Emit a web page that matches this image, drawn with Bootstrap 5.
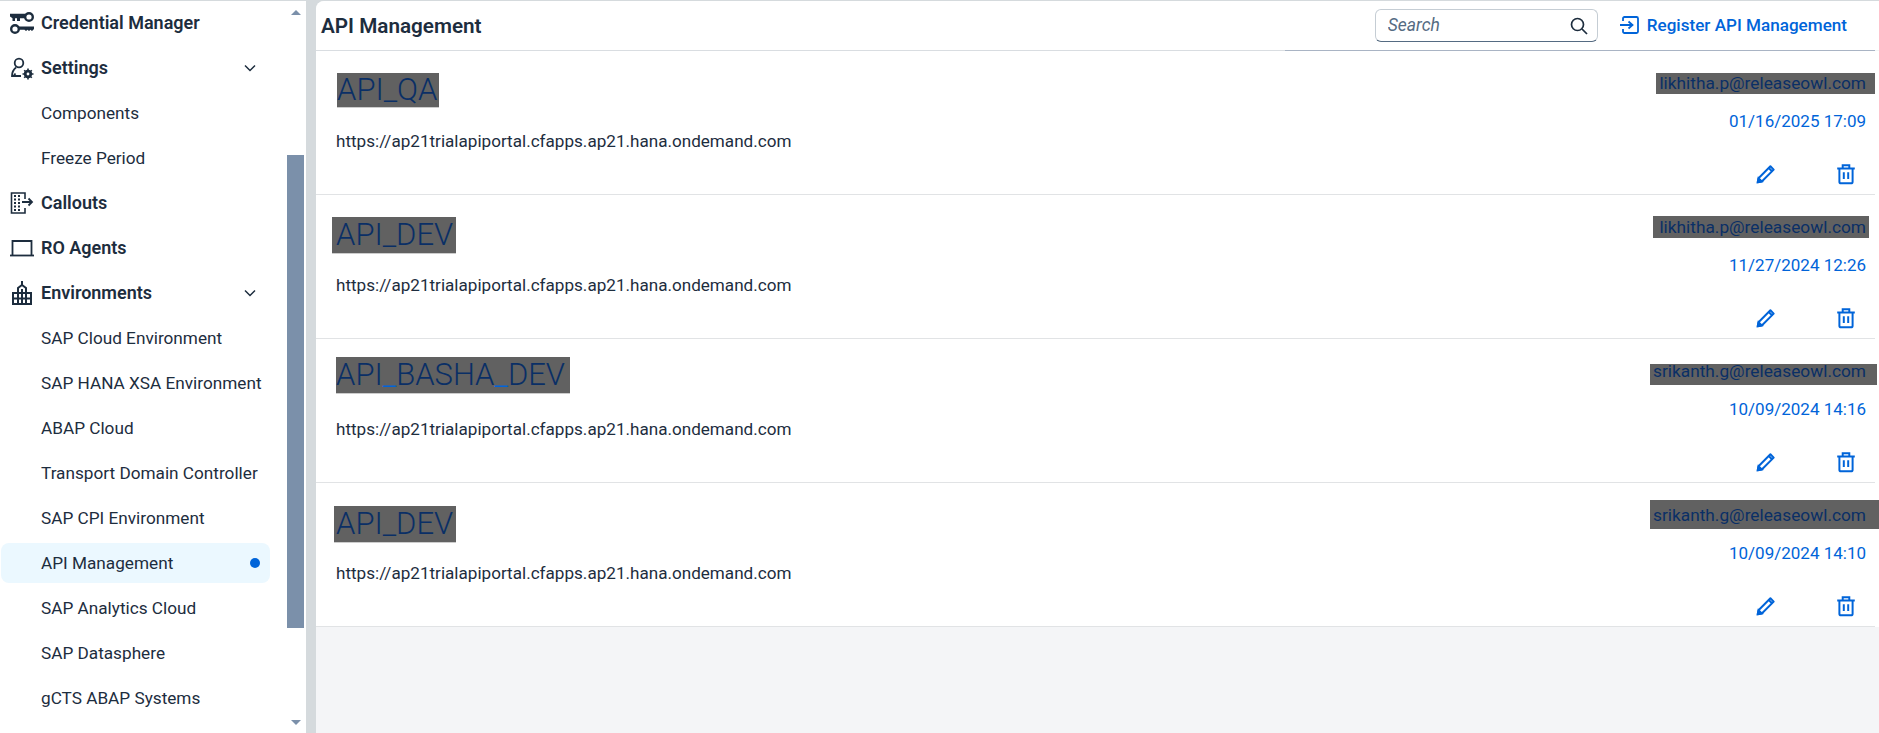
<!DOCTYPE html>
<html lang="en">
<head>
<meta charset="utf-8">
<title>API Management</title>
<link href="https://cdn.jsdelivr.net/npm/bootstrap@5.3.0/dist/css/bootstrap.min.css" rel="stylesheet">
<style>
html,body{height:733px;overflow:hidden;background:#d5dadd;font-family:Roboto,"Liberation Sans",sans-serif;color:#1d2d3e;font-size:17px}
.shell{height:733px;padding-top:1px}
.side{width:306px;background:#fff;overflow:hidden;flex:none}
.navcol{width:287px;margin-top:-1px}
.nav-item-x{height:45px;flex:none;padding-left:10px;gap:7px;font-size:17.2px;white-space:nowrap}
.nav-item-x.top{font-weight:600;font-size:18px}
.nav-item-x.sub{padding-left:41px;padding-top:2px}
.nav-item-x.cur{background:#ebf8ff;border-radius:8px;height:40px;margin:3px 17px 2px 1px;padding-left:40px}
.nav-item-x.cur>span:first-child{padding-top:2px}
.ico{width:24px;height:24px;flex:none}
.chev{width:12px;height:8px;margin-left:auto;margin-right:31px}
.dotx{width:10px;height:10px;background:#0064d9;border-radius:50%;margin-left:auto;margin-right:10px}
.sbar{width:17px;margin-top:-1px}
.arrow-up,.arrow-dn{width:0;height:0;border-left:5px solid transparent;border-right:5px solid transparent;align-self:center}
.arrow-up{border-bottom:5px solid #7b90aa;margin-top:10px}
.arrow-dn{border-top:5px solid #7b90aa;margin-top:92px}
.sthumb{height:473px;background:#7b90aa;margin-top:140px}
.mainx{margin-left:10px;flex:1;min-width:0;background:#f4f5f7;border-top-left-radius:8px;overflow:hidden}
.headx{height:49px;background:#fff;padding:0 32px 0 5px}
.headx h1{font-size:20.7px;font-weight:600;margin:0;color:#1d2d3e;padding-top:2px}
.searchx{width:223px;height:33px;border:1px solid #c5cdd4;border-bottom-color:#556b82;border-radius:6px;background:#fff;padding:0 9px 0 12px;margin-right:22px}
.searchx input{border:0;outline:0;flex:1;min-width:0;font-size:17.5px;font-style:italic;color:#556b82;padding:0;background:none}
.searchx input::placeholder{color:#556b82;opacity:1}
.reg{color:#0064d9;font-size:17.1px;font-weight:500;text-decoration:none;gap:7px}
.rulex{height:1px}
.rule-l{width:969px;background:#d9dde1}
.rule-r{flex:1;background:#a9b4c4;margin-right:4px}
.rowx{height:144px;background:#fff;padding-right:4px}
.rowin{height:144px;border-bottom:1px solid #e1e3e5;padding:0 9px 0 20px}
.lcol{min-width:0}
.twrap{height:77px;padding-top:22px}
.tlink{display:inline-block;font-size:31px;font-weight:300;line-height:36px;height:36px;background:#616161;color:#0a2f66;text-decoration:none;box-shadow:0 1px 0 #ccc}
.t1{margin-left:1px;padding-right:1px;margin-top:0;height:34px;line-height:34px}
.t2{margin-left:-4px;padding:0 3px 0 4px;margin-top:0}
.t3{padding-right:5px;margin-top:-4px}
.t4{margin-left:-2px;padding:0 3px 0 2px;margin-top:1px}
.bluex{color:#0064d9}
.urlx{line-height:26px;font-size:17.1px}
.rcol{text-align:right}
.ewrap{height:60px;padding-top:20px}
.emailx{display:inline-block;line-height:20px;background:#616161;color:#0a2f66;font-size:17.3px;padding-left:3px}
.e1{padding-right:9px;margin-right:-9px;padding-bottom:1px}
.e2{padding-left:6px;padding-right:3px;margin-right:-3px;padding-top:1px;margin-top:-1px;padding-bottom:1px}
.e3{padding-right:11px;margin-right:-11px;line-height:14px;height:21px;margin-top:3px}
.e4{padding-right:13px;margin-right:-13px;padding-top:5px;margin-top:-5px;padding-bottom:4px}
.datex{color:#0064d9;line-height:20px;font-size:17px}
.actx{margin-top:32px;gap:58px;padding-right:9px}
.actx svg{width:22px;height:22px;display:block}
</style>
</head>
<body>
<div class="shell d-flex">
  <aside class="side d-flex">
    <nav class="navcol">
      <div class="nav-item-x top d-flex align-items-center">
        <svg class="ico" viewBox="0 0 24 24" fill="none" stroke="#1d2d3e" stroke-width="2.400"><circle cx="19" cy="6" r="3.800"/><path d="M0 2.800h16v4.500H10v2.700H7V7.300H5V10H2.500V7.300L0 5.500z" fill="#1d2d3e" stroke="none"/><circle cx="5" cy="18" r="3.800"/><path d="M8 15.500h16v2.500l-2 2-1.500-1.200-1.500 1.200-1.500-1.200-1.500 1.200-1.500-1.200H8z" fill="#1d2d3e" stroke="none"/></svg>
        <span>Credential Manager</span>
      </div>
      <div class="nav-item-x top d-flex align-items-center">
        <svg class="ico" viewBox="0 0 24 24" fill="none" stroke="#1d2d3e" stroke-width="1.800"><circle cx="9" cy="7" r="4.300"/><path d="M6 11.500C3.500 13.500 2 16.500 2 20h9M5.500 17.500l-2 2.500"/><circle cx="18" cy="18" r="2.800" stroke-width="2.800"/><path d="M18 12.500v2.500M18 21v2.500M12.500 18H15M21 18h2.500M14.200 14.200l1.600 1.600M20.200 20.200l1.600 1.600M14.200 21.800l1.600-1.600M20.200 15.800l1.600-1.600" stroke-width="1.600"/></svg>
        <span>Settings</span>
        <svg class="chev" viewBox="0 0 12 8" fill="none" stroke="#1d2d3e" stroke-width="1.500"><path d="M1 1.500l5 5 5-5"/></svg>
      </div>
      <div class="nav-item-x sub d-flex align-items-center">Components</div>
      <div class="nav-item-x sub d-flex align-items-center">Freeze Period</div>
      <div class="nav-item-x top d-flex align-items-center">
        <svg class="ico" viewBox="0 0 24 24" fill="none" stroke="#1d2d3e" stroke-width="1.600"><path d="M15 8V2H1.500v20H15v-5"/><path d="M12 11h10M18.500 7.500 22 11l-3.500 3.500" stroke-width="1.800"/><path d="M4 5h2M8 5h2M4 8.500h2M8 8.500h2M4 12h2M8 12h2M4 15.500h2M8 15.500h2M4 19h2M8 19h2" stroke-width="1.800"/></svg>
        <span>Callouts</span>
      </div>
      <div class="nav-item-x top d-flex align-items-center">
        <svg class="ico" viewBox="0 0 24 24" fill="none" stroke="#1d2d3e" stroke-width="1.800"><path d="M2.500 19V5h19v14"/><path d="M0 19.500h24"/></svg>
        <span>RO Agents</span>
      </div>
      <div class="nav-item-x top d-flex align-items-center">
        <svg class="ico" viewBox="0 0 24 24" fill="none" stroke="#1d2d3e" stroke-width="2"><path d="M3 23V12h5V7l4-3 4 3v5h5v11z"/><path d="M12 4V0M3 17.500h18M8 12h8M8 12v11M12 8v15M16 12v11"/></svg>
        <span>Environments</span>
        <svg class="chev" viewBox="0 0 12 8" fill="none" stroke="#1d2d3e" stroke-width="1.500"><path d="M1 1.500l5 5 5-5"/></svg>
      </div>
      <div class="nav-item-x sub d-flex align-items-center">SAP Cloud Environment</div>
      <div class="nav-item-x sub d-flex align-items-center">SAP HANA XSA Environment</div>
      <div class="nav-item-x sub d-flex align-items-center">ABAP Cloud</div>
      <div class="nav-item-x sub d-flex align-items-center">Transport Domain Controller</div>
      <div class="nav-item-x sub d-flex align-items-center">SAP CPI Environment</div>
      <div class="nav-item-x cur d-flex align-items-center"><span>API Management</span><span class="dotx"></span></div>
      <div class="nav-item-x sub d-flex align-items-center">SAP Analytics Cloud</div>
      <div class="nav-item-x sub d-flex align-items-center">SAP Datasphere</div>
      <div class="nav-item-x sub d-flex align-items-center">gCTS ABAP Systems</div>
    </nav>
    <div class="sbar d-flex flex-column">
      <span class="arrow-up"></span>
      <span class="sthumb"></span>
      <span class="arrow-dn"></span>
    </div>
  </aside>
  <main class="mainx">
    <header class="headx d-flex align-items-center">
      <h1 class="me-auto">API Management</h1>
      <div class="searchx d-flex align-items-center">
        <input type="text" placeholder="Search" aria-label="Search">
        <svg width="18" height="18" viewBox="0 0 18 18" fill="none" stroke="#1d2d3e" stroke-width="1.700"><circle cx="7.500" cy="7.500" r="6"/><path d="M12 12l5 5"/></svg>
      </div>
      <a class="reg d-flex align-items-center" href="#">
        <svg width="20" height="20" viewBox="0 0 20 20" fill="none" stroke="#0064d9" stroke-width="1.800"><path d="M3 6V3.500A1.500 1.500 0 0 1 4.500 2h12A1.500 1.500 0 0 1 18 3.500v13a1.500 1.500 0 0 1-1.500 1.500h-12A1.500 1.500 0 0 1 3 16.500V14"/><path d="M0 10h12M8.500 6.500 12.500 10l-4 3.500"/></svg>
        <span>Register API Management</span>
      </a>
    </header>
    <div class="rulex d-flex"><span class="rule-l"></span><span class="rule-r"></span></div>

    <section class="rowx">
      <div class="rowin d-flex justify-content-between">
        <div class="lcol">
          <div class="twrap"><a class="tlink t1" href="#">API_QA</a></div>
          <div class="urlx">https://ap21trialapiportal.cfapps.ap21.hana.ondemand.com</div>
        </div>
        <div class="rcol">
          <div class="ewrap"><span class="emailx e1">likhitha.p@releaseowl.com</span></div>
          <div class="datex">01/16/2025 17:09</div>
          <div class="actx d-flex justify-content-end">
            <svg viewBox="0 0 20 20" fill="none" stroke="#0064d9" stroke-width="1.800"><path d="M2.500 17.500l.7-3.700L14 3l3 3L6.200 16.800z" stroke-linejoin="round"/><path d="M2.500 17.500l.7-3.700 3 3z" fill="#0064d9"/><path d="M12.500 4.500l3 3"/></svg>
            <svg viewBox="0 0 20 20" fill="none" stroke="#0064d9" stroke-width="1.800"><path d="M2 5h16M7 5V2h6v3M4 5v12a1.500 1.500 0 0 0 1.500 1.500h9A1.500 1.500 0 0 0 16 17V5M8 8.500v6M12 8.500v6"/></svg>
          </div>
        </div>
      </div>
    </section>

    <section class="rowx">
      <div class="rowin d-flex justify-content-between">
        <div class="lcol">
          <div class="twrap"><a class="tlink t2" href="#">API_DEV</a></div>
          <div class="urlx">https://ap21trialapiportal.cfapps.ap21.hana.ondemand.com</div>
        </div>
        <div class="rcol">
          <div class="ewrap"><span class="emailx e2">likhitha.p@releaseowl.com</span></div>
          <div class="datex">11/27/2024 12:26</div>
          <div class="actx d-flex justify-content-end">
            <svg viewBox="0 0 20 20" fill="none" stroke="#0064d9" stroke-width="1.800"><path d="M2.500 17.500l.7-3.700L14 3l3 3L6.200 16.800z" stroke-linejoin="round"/><path d="M2.500 17.500l.7-3.700 3 3z" fill="#0064d9"/><path d="M12.500 4.500l3 3"/></svg>
            <svg viewBox="0 0 20 20" fill="none" stroke="#0064d9" stroke-width="1.800"><path d="M2 5h16M7 5V2h6v3M4 5v12a1.500 1.500 0 0 0 1.500 1.500h9A1.500 1.500 0 0 0 16 17V5M8 8.500v6M12 8.500v6"/></svg>
          </div>
        </div>
      </div>
    </section>

    <section class="rowx">
      <div class="rowin d-flex justify-content-between">
        <div class="lcol">
          <div class="twrap"><a class="tlink t3" href="#">API<span class="bluex">_</span>BASHA<span class="bluex">_</span>DEV</a></div>
          <div class="urlx">https://ap21trialapiportal.cfapps.ap21.hana.ondemand.com</div>
        </div>
        <div class="rcol">
          <div class="ewrap"><span class="emailx e3">srikanth.g@releaseowl.com</span></div>
          <div class="datex">10/09/2024 14:16</div>
          <div class="actx d-flex justify-content-end">
            <svg viewBox="0 0 20 20" fill="none" stroke="#0064d9" stroke-width="1.800"><path d="M2.500 17.500l.7-3.700L14 3l3 3L6.200 16.800z" stroke-linejoin="round"/><path d="M2.500 17.500l.7-3.700 3 3z" fill="#0064d9"/><path d="M12.500 4.500l3 3"/></svg>
            <svg viewBox="0 0 20 20" fill="none" stroke="#0064d9" stroke-width="1.800"><path d="M2 5h16M7 5V2h6v3M4 5v12a1.500 1.500 0 0 0 1.500 1.500h9A1.500 1.500 0 0 0 16 17V5M8 8.500v6M12 8.500v6"/></svg>
          </div>
        </div>
      </div>
    </section>

    <section class="rowx">
      <div class="rowin d-flex justify-content-between">
        <div class="lcol">
          <div class="twrap"><a class="tlink t4" href="#">API_DEV</a></div>
          <div class="urlx">https://ap21trialapiportal.cfapps.ap21.hana.ondemand.com</div>
        </div>
        <div class="rcol">
          <div class="ewrap"><span class="emailx e4">srikanth.g@releaseowl.com</span></div>
          <div class="datex">10/09/2024 14:10</div>
          <div class="actx d-flex justify-content-end">
            <svg viewBox="0 0 20 20" fill="none" stroke="#0064d9" stroke-width="1.800"><path d="M2.500 17.500l.7-3.700L14 3l3 3L6.200 16.800z" stroke-linejoin="round"/><path d="M2.500 17.500l.7-3.700 3 3z" fill="#0064d9"/><path d="M12.500 4.500l3 3"/></svg>
            <svg viewBox="0 0 20 20" fill="none" stroke="#0064d9" stroke-width="1.800"><path d="M2 5h16M7 5V2h6v3M4 5v12a1.500 1.500 0 0 0 1.500 1.500h9A1.500 1.500 0 0 0 16 17V5M8 8.500v6M12 8.500v6"/></svg>
          </div>
        </div>
      </div>
    </section>
  </main>
</div>
<script src="https://cdn.jsdelivr.net/npm/bootstrap@5.3.0/dist/js/bootstrap.bundle.min.js"></script>
</body>
</html>
